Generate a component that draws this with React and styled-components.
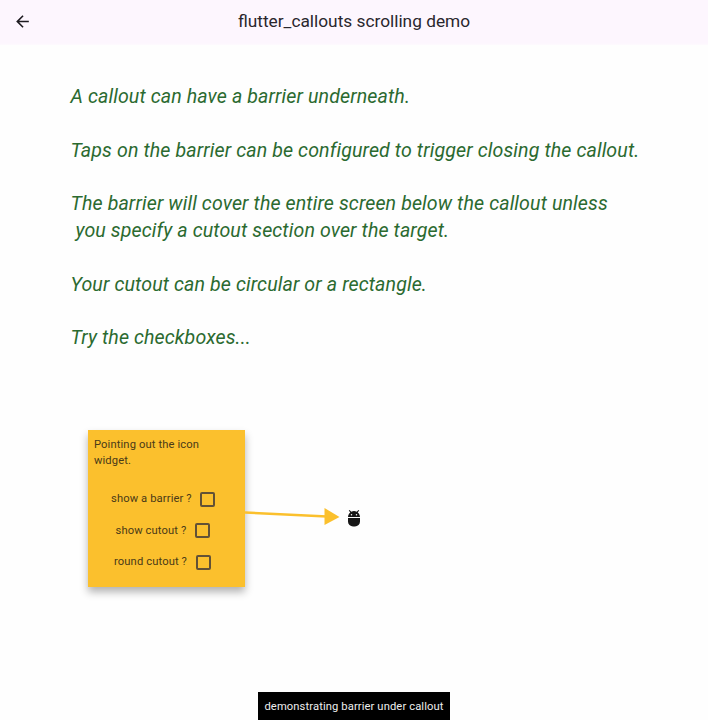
import React from "react";
import styled, { createGlobalStyle } from "styled-components";

const Global = createGlobalStyle`
  * { box-sizing: border-box; }
  body { margin: 0; background: #fefefe; font-family: Roboto, sans-serif; color: #2a272d; }
`;
const Page = styled.div`
  width: 708px; height: 720px; display: flex; flex-direction: column; overflow: hidden; background: #fefefe;
`;
const AppBar = styled.header`
  height: 45px; flex: none; display: grid; grid-template-columns: 44px 1fr 44px; align-items: center;
  padding-bottom: 2px; background: linear-gradient(#fdf6fe 43px, #fefafe 45px);
`;
const BackButton = styled.button`
  height: 43px; width: 44px; border: 0; padding: 0; background: none; display: grid; place-items: center; color: #1d1b20;
`;
const Title = styled.h1`
  margin: 0 0 2px; text-align: center; font-size: 17.3px; line-height: 24px; font-weight: 400; white-space: nowrap;
`;
const Notes = styled.section`
  padding: 39.4px 0 0 70.5px; height: 385px; flex: none;
  color: #2b6a30; font-style: italic; font-size: 19.6px; letter-spacing: .11px; line-height: 26.75px; white-space: pre;
`;
const Line = styled.div`
  height: 26.75px; margin-bottom: ${(p) => (p.$tight ? 0 : 26.75)}px;
`;
const Demo = styled.section`
  display: flex; padding-left: 88px; height: 262px; flex: none;
`;
const Callout = styled.div`
  width: 157px; height: 157px; padding: 7px 6px 6px; background: #fbc02d; color: #4a3a18;
  box-shadow: 0 5px 8px rgba(0,0,0,.3); font-size: 11.2px; line-height: 16px; letter-spacing: .12px;
`;
const Message = styled.p`
  margin: 0 0 14.5px; width: 130px;
`;
const Option = styled.label`
  height: 31.5px; display: flex; align-items: center; padding-left: ${(p) => p.$indent}px; white-space: nowrap;
`;
const OptionText = styled.span`
  width: ${(p) => p.$width}px; flex: none;
`;
const Box = styled.span`
  width: 15px; height: 15px; border: 2px solid #625136; border-radius: 2px;
`;
const Pointer = styled.svg`
  display: block; width: 95px; height: 157px;
`;
const Android = styled.svg`
  display: block; width: 14px; height: 20px; margin: 78px 0 0 7px;
`;
const Caption = styled.footer`
  width: 192px; height: 28px; margin: 0 0 0 258px; background: #000; color: #eee;
  display: grid; place-items: center; font-size: 11.2px; letter-spacing: .11px; white-space: nowrap;
`;
const lines = [
  ["A callout can have a barrier underneath."],
  ["Taps on the barrier can be configured to trigger closing the callout."],
  ["The barrier will cover the entire screen below the callout unless", true],
  [" you specify a cutout section over the target."],
  ["Your cutout can be circular or a rectangle."],
  ["Try the checkboxes..."],
];
const options = [["show a barrier ?", 17, 88.5], ["show cutout ?", 21.5, 79], ["round cutout ?", 20, 81.5]];

export default function App() {
  return (
    <Page>
      <Global />
      <AppBar>
        <BackButton aria-label="Back">
          <svg width="19" height="19" viewBox="0 0 24 24"><path fill="currentColor" d="M20 11H7.83l5.59-5.59L12 4l-8 8 8 8 1.41-1.41L7.83 13H20z" /></svg>
        </BackButton>
        <Title>flutter_callouts scrolling demo</Title>
      </AppBar>
      <Notes>{lines.map(([t, tight]) => <Line key={t} $tight={tight}>{t}</Line>)}</Notes>
      <Demo>
        <Callout>
          <Message>Pointing out the icon widget.</Message>
          {options.map(([t, i, w]) => <Option key={t} $indent={i}><OptionText $width={w}>{t}</OptionText><Box /></Option>)}
        </Callout>
        <Pointer viewBox="0 0 95 157">
          <path d="M0 82.500L82 86.500" stroke="#fbc02d" strokeWidth="2.4" />
          <path d="M79.500 78L94.500 87L79.500 95z" fill="#fbc02d" />
        </Pointer>
        <Android viewBox="0 0 14 20">
          <path fill="#171717" d="M1 10h12v3.500a5 5 0 0 1-5 5H6a5 5 0 0 1-5-5zM1 9c0-2 1-3.600 2.300-4.600L1.800 2.600l.7-.7 1.800 1.800a6 6 0 0 1 5.400 0l1.800-1.800.7.7-1.500 1.800C12 5.400 13 7 13 9z" />
          <circle cx="4.500" cy="6.700" r=".75" fill="#fff" /><circle cx="9.500" cy="6.700" r=".75" fill="#fff" />
        </Android>
      </Demo>
      <Caption>demonstrating barrier under callout</Caption>
    </Page>
  );
}
